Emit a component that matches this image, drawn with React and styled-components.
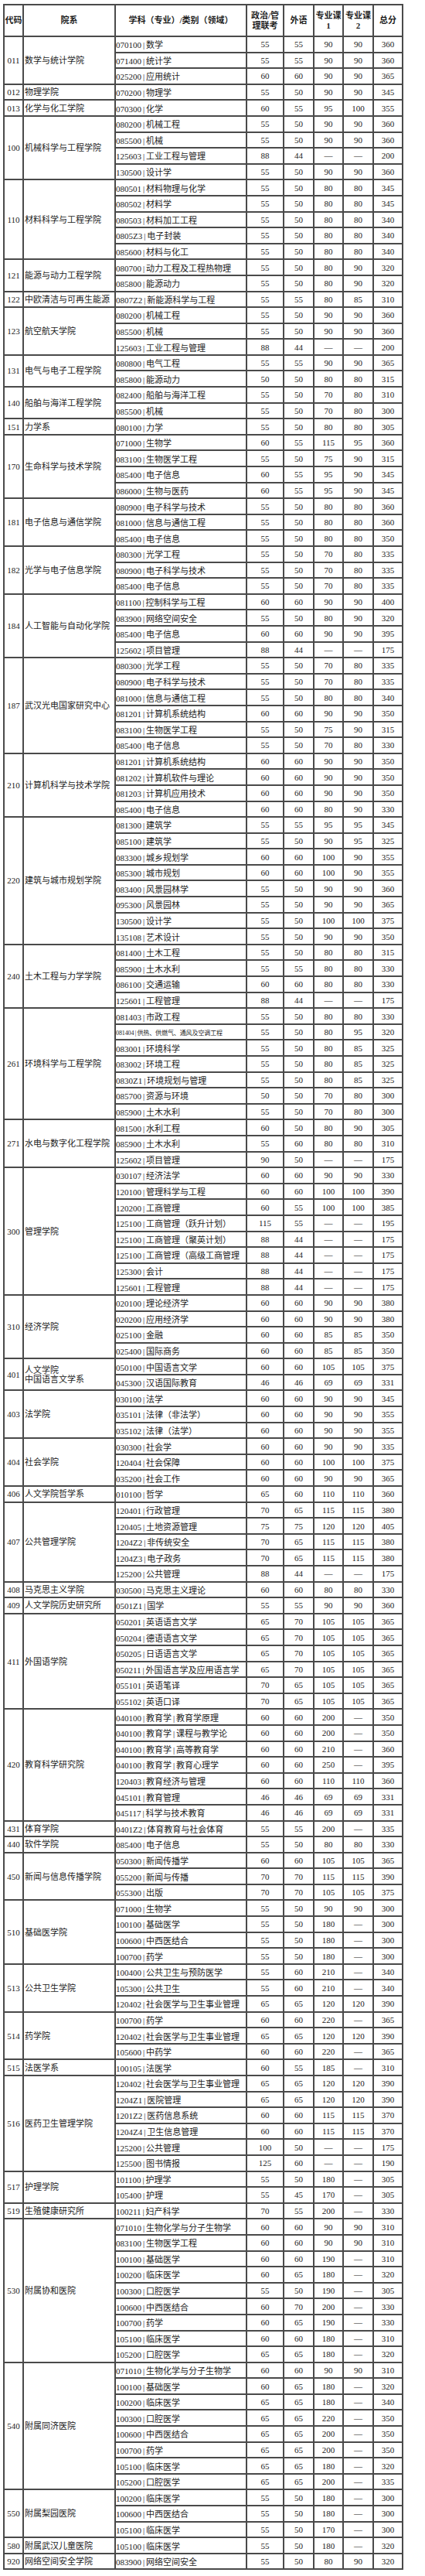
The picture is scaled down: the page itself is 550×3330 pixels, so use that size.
import React from 'react';
import styled, { createGlobalStyle } from 'styled-components';

const Page = createGlobalStyle`
  html, body {
    margin: 0;
    padding: 0;
    background: #fff;
  }
  body {
    font-family: "Liberation Serif", "Noto Sans CJK SC", serif;
    color: #222;
  }
`;

const Wrap = styled.div`
  padding: 5px 0 0 4px;
  width: 550px;
  height: 3330px;
  box-sizing: border-box;
  background: #fff;
`;

const Sheet = styled.table`
  border-collapse: collapse;
  table-layout: fixed;
  width: 516px;
  font-size: 11px;
  border: 2px solid #4a4a4a;
`;

const HeadRow = styled.tr`
  height: 41px;
`;

const Row = styled.tr`
  height: 20.6px;
`;

const HeadCell = styled.th`
  border: 2px solid #4a4a4a;
  padding: 0;
  font-weight: bold;
  font-size: 11px;
  line-height: 13px;
  text-align: center;
  vertical-align: middle;
  color: #1e1e1e;
`;

const Cell = styled.td`
  border: 2px solid #4a4a4a;
  padding: 0;
  vertical-align: middle;
  white-space: nowrap;
  overflow: hidden;
`;

const CodeCell = styled(Cell)`
  text-align: center;
`;

const DeptCell = styled(Cell)`
  text-align: left;
  padding-left: 1px;
  line-height: 12px;
  white-space: normal;
`;

const SubjectCell = styled(Cell)`
  text-align: left;
  padding-left: 0;
  font-size: ${p => (p.$small ? '8px' : '11px')};
  letter-spacing: ${p => (p.$small ? '-0.1px' : '0')};
`;

const ScoreCell = styled(Cell)`
  text-align: center;
`;

const Bar = styled.span`
  display: inline-block;
  width: ${p => (p.$small ? '4px' : '6px')};
  text-align: center;
`;

const groups = [
  ['011', '数学与统计学院', `070100|数学 55 55 90 90 360
071400|统计学 55 55 90 90 360
025200|应用统计 60 60 90 90 365`],
  ['012', '物理学院', `070200|物理学 55 50 90 90 345`],
  ['013', '化学与化工学院', `070300|化学 60 55 95 100 355`],
  ['100', '机械科学与工程学院', `080200|机械工程 55 50 90 90 360
085500|机械 55 50 90 90 360
125603|工业工程与管理 88 44 - - 200
130500|设计学 55 50 90 90 360`],
  ['110', '材料科学与工程学院', `080501|材料物理与化学 55 50 80 80 345
080502|材料学 55 50 80 80 345
080503|材料加工工程 55 50 80 80 340
0805Z3|电子封装 55 50 80 80 340
085600|材料与化工 55 50 80 80 340`],
  ['121', '能源与动力工程学院', `080700|动力工程及工程热物理 55 50 80 90 320
085800|能源动力 55 50 80 90 320`],
  ['122', '中欧清洁与可再生能源', `0807Z2|新能源科学与工程 55 55 80 85 310`],
  ['123', '航空航天学院', `080200|机械工程 55 50 90 90 360
085500|机械 55 50 90 90 360
125603|工业工程与管理 88 44 - - 200`],
  ['131', '电气与电子工程学院', `080800|电气工程 55 55 90 90 365
085800|能源动力 50 50 80 80 315`],
  ['140', '船舶与海洋工程学院', `082400|船舶与海洋工程 55 50 70 80 310
085500|机械 55 50 70 80 300`],
  ['151', '力学系', `080100|力学 55 50 80 80 305`],
  ['170', '生命科学与技术学院', `071000|生物学 60 55 115 95 360
083100|生物医学工程 55 50 75 90 315
085400|电子信息 60 55 95 90 345
086000|生物与医药 60 55 95 90 345`],
  ['181', '电子信息与通信学院', `080900|电子科学与技术 55 50 80 80 360
081000|信息与通信工程 55 50 80 80 360
085400|电子信息 55 50 80 80 350`],
  ['182', '光学与电子信息学院', `080300|光学工程 55 50 70 80 335
080900|电子科学与技术 55 50 70 80 335
085400|电子信息 55 50 70 80 335`],
  ['184', '人工智能与自动化学院', `081100|控制科学与工程 60 60 90 90 400
083900|网络空间安全 55 50 80 90 320
085400|电子信息 60 60 90 90 395
125602|项目管理 88 44 - - 175`],
  ['187', '武汉光电国家研究中心', `080300|光学工程 55 50 70 80 335
080900|电子科学与技术 55 50 70 80 335
081000|信息与通信工程 55 50 80 80 340
081201|计算机系统结构 60 60 90 90 350
083100|生物医学工程 55 50 75 90 315
085400|电子信息 55 50 70 80 330`],
  ['210', '计算机科学与技术学院', `081201|计算机系统结构 60 60 90 90 350
081202|计算机软件与理论 60 60 90 90 350
081203|计算机应用技术 60 60 90 90 350
085400|电子信息 60 60 80 90 330`],
  ['220', '建筑与城市规划学院', `081300|建筑学 55 55 95 95 345
085100|建筑学 55 50 90 95 325
083300|城乡规划学 60 60 100 90 355
085300|城市规划 60 60 100 90 355
083400|风景园林学 55 50 90 90 360
095300|风景园林 55 50 90 90 365
130500|设计学 55 50 100 100 375
135108|艺术设计 55 50 90 90 350`],
  ['240', '土木工程与力学学院', `081400|土木工程 55 50 80 80 315
085900|土木水利 55 55 80 80 330
086100|交通运输 60 60 80 80 330
125601|工程管理 88 44 - - 175`],
  ['261', '环境科学与工程学院', `081403|市政工程 55 50 80 80 330
!081404|供热、供燃气、通风及空调工程 55 50 80 95 320
083001|环境科学 55 50 80 85 325
083002|环境工程 55 50 80 85 325
0830Z1|环境规划与管理 55 50 80 85 325
085700|资源与环境 50 50 70 80 300
085900|土木水利 55 50 70 80 300`],
  ['271', '水电与数字化工程学院', `081500|水利工程 60 50 80 90 305
085900|土木水利 55 60 80 80 310
125602|项目管理 90 50 - - 175`],
  ['300', '管理学院', `030107|经济法学 60 60 90 90 330
120100|管理科学与工程 60 60 100 100 390
120200|工商管理 60 55 100 100 385
125100|工商管理（跃升计划） 115 55 - - 195
125100|工商管理（聚英计划） 88 44 - - 175
125100|工商管理（高级工商管理 88 44 - - 175
125300|会计 88 44 - - 175
125601|工程管理 88 44 - - 175`],
  ['310', '经济学院', `020100|理论经济学 60 60 90 90 380
020200|应用经济学 60 60 90 90 380
025100|金融 60 60 85 85 350
025400|国际商务 60 60 85 85 350`],
  ['401', '人文学院\n中国语言文学系', `050100|中国语言文学 60 60 105 105 375
045300|汉语国际教育 46 46 69 69 331`],
  ['403', '法学院', `030100|法学 60 60 90 90 345
035101|法律（非法学） 60 60 90 90 355
035102|法律（法学） 60 60 90 90 355`],
  ['404', '社会学院', `030300|社会学 60 60 90 90 335
120404|社会保障 60 60 100 100 375
035200|社会工作 60 60 90 90 365`],
  ['406', '人文学院哲学系', `010100|哲学 65 60 110 110 360`],
  ['407', '公共管理学院', `120401|行政管理 70 65 115 115 380
120405|土地资源管理 75 75 120 120 405
1204Z2|非传统安全 70 65 115 115 380
1204Z3|电子政务 70 65 115 115 380
125200|公共管理 88 44 - - 175`],
  ['408', '马克思主义学院', `030500|马克思主义理论 60 60 80 80 330`],
  ['409', '人文学院历史研究所', `0501Z1|国学 55 55 90 90 360`],
  ['411', '外国语学院', `050201|英语语言文学 65 70 105 105 365
050204|德语语言文学 65 70 105 105 365
050205|日语语言文学 65 70 105 105 365
050211|外国语言学及应用语言学 65 70 105 105 365
055101|英语笔译 70 65 105 105 365
055102|英语口译 70 65 105 105 365`],
  ['420', '教育科学研究院', `040100|教育学|教育学原理 60 60 200 - 350
040100|教育学|课程与教学论 60 60 200 - 350
040100|教育学|高等教育学 60 60 210 - 360
040100|教育学|教育心理学 60 60 250 - 395
120403|教育经济与管理 60 60 110 110 360
045101|教育管理 46 46 69 69 331
045117|科学与技术教育 46 46 69 69 331`],
  ['431', '体育学院', `0401Z2|体育教育与社会体育 55 55 200 - 335`],
  ['440', '软件学院', `085400|电子信息 55 50 80 80 330`],
  ['450', '新闻与信息传播学院', `050300|新闻传播学 60 60 105 105 365
055200|新闻与传播 70 70 115 115 390
055300|出版 70 70 105 105 375`],
  ['510', '基础医学院', `071000|生物学 55 50 90 90 300
100100|基础医学 55 50 180 - 300
100600|中西医结合 55 50 180 - 300
100700|药学 55 50 180 - 300`],
  ['513', '公共卫生学院', `100400|公共卫生与预防医学 55 60 210 - 340
105300|公共卫生 55 60 210 - 340
120402|社会医学与卫生事业管理 65 65 120 120 390`],
  ['514', '药学院', `100700|药学 60 60 220 - 365
120402|社会医学与卫生事业管理 65 65 120 120 390
105600|中药学 60 60 220 - 365`],
  ['515', '法医学系', `100105|法医学 60 55 185 - 310`],
  ['516', '医药卫生管理学院', `120402|社会医学与卫生事业管理 65 65 120 120 390
1204Z1|医院管理 65 65 120 120 390
1201Z2|医药信息系统 60 60 115 115 370
1204Z4|卫生信息管理 60 60 115 115 370
125200|公共管理 100 50 - - 175
125500|图书情报 125 60 - - 190`],
  ['517', '护理学院', `101100|护理学 55 50 180 - 305
105400|护理 55 45 170 - 305`],
  ['519', '生殖健康研究所', `100211|妇产科学 70 55 200 - 330`],
  ['530', '附属协和医院', `071010|生物化学与分子生物学 60 60 90 90 310
083100|生物医学工程 60 60 90 90 310
100100|基础医学 60 60 190 - 310
100200|临床医学 60 65 180 - 320
100300|口腔医学 55 50 190 - 305
100600|中西医结合 60 70 200 - 330
100700|药学 60 65 190 - 330
105100|临床医学 60 60 180 - 310
105200|口腔医学 65 65 180 - 320`],
  ['540', '附属同济医院', `071010|生物化学与分子生物学 60 60 90 90 310
100100|基础医学 60 65 180 - 320
100200|临床医学 65 65 180 - 340
100300|口腔医学 65 65 220 - 350
100600|中西医结合 65 65 200 - 350
100700|药学 65 65 200 - 350
105100|临床医学 65 65 180 - 320
105200|口腔医学 65 65 200 - 335`],
  ['550', '附属梨园医院', `100200|临床医学 55 50 180 - 300
100600|中西医结合 55 50 180 - 300
105100|临床医学 55 50 170 - 300`],
  ['580', '附属武汉儿童医院', `105100|临床医学 55 50 180 - 320`],
  ['920', '网络空间安全学院', `083900|网络空间安全 55 50 80 90 320`],
];

const parseRows = text =>
  text.trim().split('\n').map(line => {
    const parts = line.trim().split(/\s+/);
    let subject = parts[0];
    const small = subject.startsWith('!');
    if (small) subject = subject.slice(1);
    const scores = parts.slice(1).map(v => (v === '-' ? '—' : v));
    return { subject, small, scores };
  });

const Subject = ({ text, small }) => {
  const pieces = text.split('|');
  return pieces.map((p, i) => (
    <React.Fragment key={i}>
      {i > 0 && <Bar $small={small}>|</Bar>}
      {p}
    </React.Fragment>
  ));
};

const App = () => {
  return (
    <Wrap>
      <Page />
      <Sheet>
        <colgroup>
          <col style={{ width: 25 }} />
          <col style={{ width: 119 }} />
          <col style={{ width: 170 }} />
          <col style={{ width: 48 }} />
          <col style={{ width: 39 }} />
          <col style={{ width: 38 }} />
          <col style={{ width: 39 }} />
          <col style={{ width: 38 }} />
        </colgroup>
        <thead>
          <HeadRow>
            <HeadCell>代码</HeadCell>
            <HeadCell>院系</HeadCell>
            <HeadCell>学科（专业）/类别（领域）</HeadCell>
            <HeadCell>政治/管<br />理联考</HeadCell>
            <HeadCell>外语</HeadCell>
            <HeadCell>专业课<br />1</HeadCell>
            <HeadCell>专业课<br />2</HeadCell>
            <HeadCell>总分</HeadCell>
          </HeadRow>
        </thead>
        <tbody>
          {groups.map(([code, dept, text]) => {
            const rows = parseRows(text);
            return rows.map((r, i) => (
              <Row key={code + i}>
                {i === 0 && <CodeCell rowSpan={rows.length}>{code}</CodeCell>}
                {i === 0 && (
                  <DeptCell rowSpan={rows.length}>
                    {dept.split('\n').map((d, j) => (
                      <React.Fragment key={j}>
                        {j > 0 && <br />}
                        {d}
                      </React.Fragment>
                    ))}
                  </DeptCell>
                )}
                <SubjectCell $small={r.small}>
                  <Subject text={r.subject} small={r.small} />
                </SubjectCell>
                {r.scores.map((s, k) => (
                  <ScoreCell key={k}>{s}</ScoreCell>
                ))}
              </Row>
            ));
          })}
        </tbody>
      </Sheet>
    </Wrap>
  );
};

export default App;
